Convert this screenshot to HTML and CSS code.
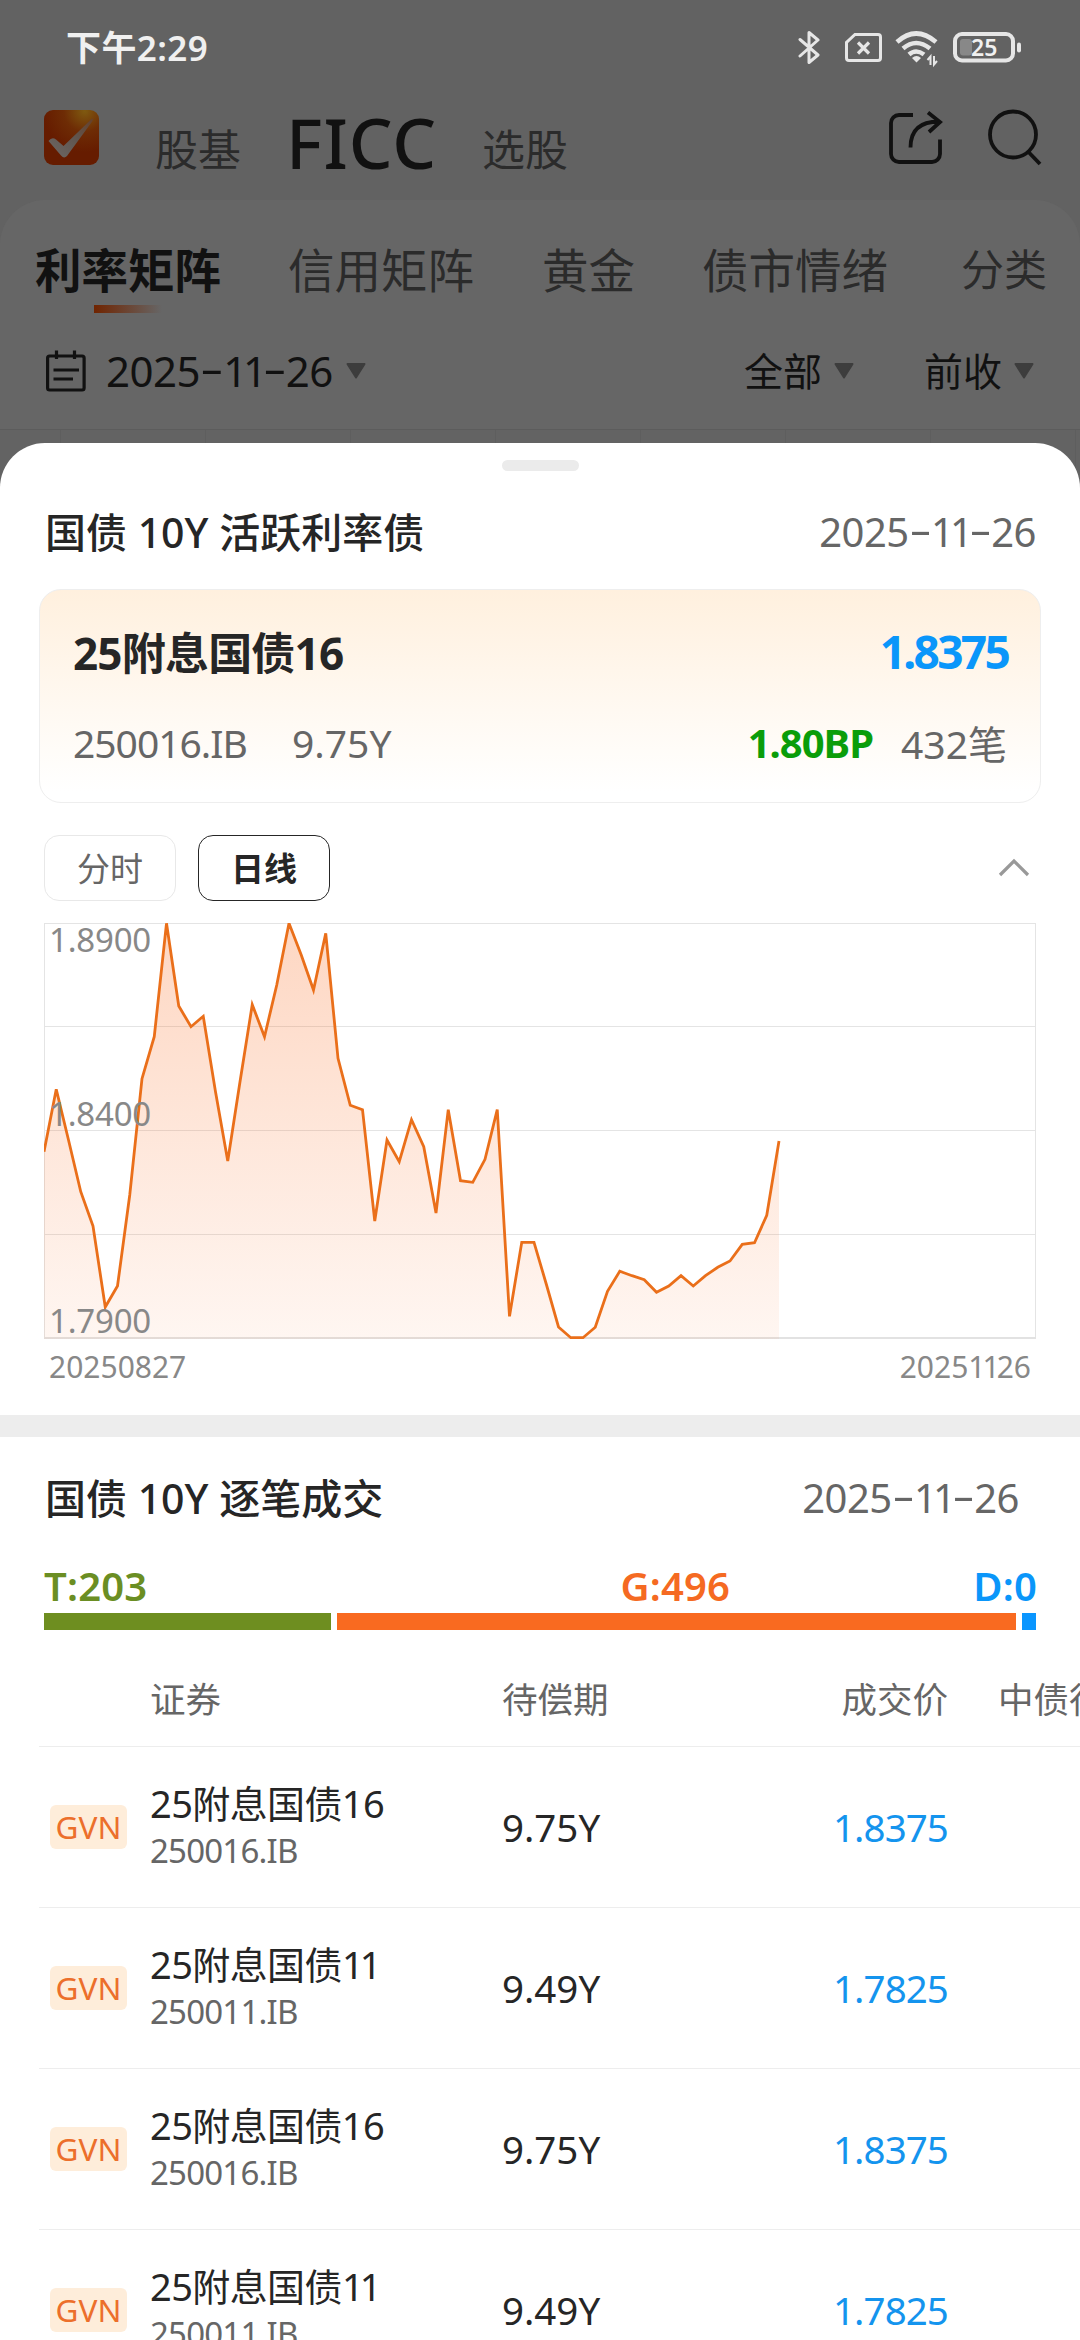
FILE: index.html
```html
<!DOCTYPE html>
<html lang="zh-CN">
<head>
<meta charset="utf-8">
<title>FICC 利率矩阵</title>
<link rel="stylesheet" href="styles.css">
</head>
<body>
<div class="screen">
  <div class="page">
    <div class="status">
      <span class="clock">下午2:29</span>
      <svg class="status-icons" width="230" height="40" viewBox="0 0 230 40" fill="none" stroke="#e6e6e6">
        <path d="M2 11.500L20 27L11 34.500V4.500L20 12L2 28" stroke-width="3" stroke-linejoin="round" stroke-linecap="round"/>
        <path d="M57 6.500H80a2.500 2.500 0 0 1 2.500 2.500V30a2.500 2.500 0 0 1-2.500 2.500H51a2.500 2.500 0 0 1-2.500-2.500V14.500Z" stroke-width="3"/>
        <path d="M60 14.500L71 25.500M71 14.500L60 25.500" stroke-width="3.200"/>
        <g stroke-width="4.600">
          <path d="M99 14Q118 -3 138 14"/>
          <path d="M105 20.500Q118 9.500 132 20.500"/>
          <path d="M111 26.500Q118 20.500 126 26.500"/>
        </g>
        <path d="M118.500 34.500L114 30q4.500-4 9 0Z" fill="#e6e6e6" stroke="none"/>
        <path d="M132.500 37V28.500L129.500 32M136 28V36.500L139 33" stroke-width="2"/>
        <rect x="157" y="6" width="58" height="26.500" rx="7" stroke-width="4"/>
        <rect x="162" y="11" width="12" height="16.500" rx="3" fill="#888" stroke="none"/>
        <rect x="219" y="14.500" width="4" height="10" rx="2" fill="#e6e6e6" stroke="none"/>
        <text class="battery-text" x="173" y="27.500">25</text>
      </svg>
    </div>
    <div class="header">
      <svg class="logo" width="55" height="55" viewBox="0 0 55 55">
        <defs>
          <radialGradient id="logoBg" cx="0.74" cy="0.02" r="0.75">
            <stop offset="0" stop-color="#7f5a10"/><stop offset="0.500" stop-color="#6e2c05"/><stop offset="1" stop-color="#661c00"/>
          </radialGradient>
          <linearGradient id="logoTick" x1="0" y1="1" x2="1" y2="0">
            <stop offset="0" stop-color="#6d6865"/><stop offset="0.550" stop-color="#605650"/><stop offset="1" stop-color="#66402a"/>
          </linearGradient>
        </defs>
        <rect width="55" height="55" rx="9" fill="url(#logoBg)"/>
        <path d="M4.500 31Q8 26.500 12 29.500L19.500 36L46 10.500Q50 6.500 48.500 11L23 46Q20 49 17 45.500Z" fill="url(#logoTick)"/>
      </svg>
      <span class="nav nav-fund">股基</span>
      <span class="nav nav-ficc">FICC</span>
      <span class="nav nav-pick">选股</span>
      <svg class="head-icons" width="160" height="64" viewBox="0 0 160 64" fill="none" stroke="#111" stroke-width="3.800">
        <path d="M29 11H15a8 8 0 0 0-8 8V50a8 8 0 0 0 8 8H48a8 8 0 0 0 8-8V35.500"/>
        <path d="M26.500 43.500C26.500 27 35 17.500 55 17.500M44 8.500L56 18L45 28"/>
        <circle cx="129" cy="30.500" r="23"/>
        <path d="M144 47.500L156 60"/>
      </svg>
    </div>
    <div class="panel">
      <div class="tabs">
        <span class="tab tab-on">利率矩阵</span>
        <span class="tab tab-credit">信用矩阵</span>
        <span class="tab tab-gold">黄金</span>
        <span class="tab tab-mood">债市情绪</span>
        <span class="tab tab-class">分类</span>
      </div>
      <div class="filters">
        <svg width="40" height="44" viewBox="0 0 40 44" fill="none" stroke="#111" stroke-width="3.200">
          <rect x="1.600" y="7" width="36.500" height="34" rx="2"/>
          <path d="M10.500 1.500V10M28.500 1.500V10M7.500 21H33M7.500 30H27"/>
        </svg>
        <span class="f-date">2025<i class="dash">-</i><i class="ones">11</i><i class="dash">-</i>26</span>
        <svg class="caret" width="22" height="16"><path d="M2.500 1H19.500L11 14.500Z"/></svg>
        <span class="f-all">全部</span>
        <svg class="caret" width="22" height="16"><path d="M2.500 1H19.500L11 14.500Z"/></svg>
        <span class="f-prev">前收</span>
        <svg class="caret" width="22" height="16"><path d="M2.500 1H19.500L11 14.500Z"/></svg>
      </div>
      <div class="matrix"><i></i><i></i><i></i><i></i><i></i><i></i><i></i><i></i></div>
    </div>
  </div>

  <div class="sheet">
    <div class="handle"></div>
    <div class="title-row">
      <h2>国债 10Y 活跃利率债</h2>
      <span class="date">2025<i class="dash">-</i><i class="ones">11</i><i class="dash">-</i>26</span>
    </div>
    <div class="card">
      <div class="card-top">
        <span class="bond">25附息国债16</span>
        <span class="yield">1.8375</span>
      </div>
      <div class="card-bottom">
        <span class="code">250016.IB</span>
        <span class="term">9.75Y</span>
        <span class="bp">1.80BP</span>
        <span class="deals">432笔</span>
      </div>
    </div>
    <div class="tools">
      <span class="chip">分时</span>
      <span class="chip chip-on">日线</span>
      <svg class="chevron" width="32" height="20" viewBox="0 0 32 20" fill="none" stroke="#999" stroke-width="3.200"><path d="M2 17L16 3L30 17"/></svg>
    </div>
    <div class="chart">
      <svg width="992" height="417" viewBox="44 923 992 417">
        <defs>
          <linearGradient id="area" x1="0" y1="0" x2="0" y2="1">
            <stop offset="0" stop-color="#fa6a1e" stop-opacity="0.270"/><stop offset="1" stop-color="#fa6a1e" stop-opacity="0.060"/>
          </linearGradient>
        </defs>
        <path d="M44 923.500H1036M44 1026.500H1036M44 1130.500H1036M44 1234.500H1036M44.500 923V1339M1035.500 923V1339" fill="none" stroke="#e4e4e4"/>
        <path d="M44 1338H1036" stroke="#e2e2e2" stroke-width="2"/>
        <path fill="url(#area)" d="M44 1151.700L56.250 1089.300L68.500 1140L80.750 1191.700L93 1226L105.250 1307L117.500 1286L129.750 1195L142 1078.700L154.250 1036.700L166.500 923.300L178.750 1006L191 1026.700L203.250 1016.300L215.500 1091.700L227.750 1161L240 1081.700L252.250 1004.700L264.500 1036.700L276.750 985L289 923.300L301.250 955L313.500 990L325.750 933.300L338 1058.300L350.250 1105.300L362.500 1109.700L374.750 1221L387 1140L399.250 1161.700L411.500 1119.700L423.750 1146.700L436 1213L448.250 1109.700L460.500 1180.700L472.750 1182.300L485 1159.300L497.250 1109.700L509.500 1316.300L521.750 1242.300L534 1242.300L546.250 1284L558.500 1327L570.750 1337.700L583 1337.700L595.250 1327.300L607.500 1291.300L619.750 1271.300L632 1275.700L644.250 1279.700L656.500 1292.300L668.750 1286L681 1275.700L693.250 1286L705.500 1275.700L717.750 1267.300L730 1261L742.250 1244.300L754.500 1242.700L766.750 1215.300L779 1141V1339H44Z"/>
        <path fill="none" stroke="#ea6f1a" stroke-width="2.800" d="M44 1151.700L56.250 1089.300L68.500 1140L80.750 1191.700L93 1226L105.250 1307L117.500 1286L129.750 1195L142 1078.700L154.250 1036.700L166.500 923.300L178.750 1006L191 1026.700L203.250 1016.300L215.500 1091.700L227.750 1161L240 1081.700L252.250 1004.700L264.500 1036.700L276.750 985L289 923.300L301.250 955L313.500 990L325.750 933.300L338 1058.300L350.250 1105.300L362.500 1109.700L374.750 1221L387 1140L399.250 1161.700L411.500 1119.700L423.750 1146.700L436 1213L448.250 1109.700L460.500 1180.700L472.750 1182.300L485 1159.300L497.250 1109.700L509.500 1316.300L521.750 1242.300L534 1242.300L546.250 1284L558.500 1327L570.750 1337.700L583 1337.700L595.250 1327.300L607.500 1291.300L619.750 1271.300L632 1275.700L644.250 1279.700L656.500 1292.300L668.750 1286L681 1275.700L693.250 1286L705.500 1275.700L717.750 1267.300L730 1261L742.250 1244.300L754.500 1242.700L766.750 1215.300L779 1141"/>
      </svg>
      <span class="y-label y-top">1.8900</span>
      <span class="y-label y-mid">1.8400</span>
      <span class="y-label y-low">1.7900</span>
    </div>
    <div class="x-labels"><span>20250827</span><span>2025<i class="ones">11</i>26</span></div>

    <div class="band"></div>

    <div class="title-row trades">
      <h2>国债 10Y 逐笔成交</h2>
      <span class="date">2025<i class="dash">-</i><i class="ones">11</i><i class="dash">-</i>26</span>
    </div>
    <div class="ratio-labels">
      <span class="t">T:203</span><span class="g">G:496</span><span class="d">D:0</span>
    </div>
    <div class="ratio"><i class="bar-t"></i><i class="bar-g"></i><i class="bar-d"></i></div>

    <div class="table">
      <div class="thead row">
        <span></span><span>证券</span><span>待偿期</span><span class="num">成交价</span><span class="last">中债行权</span>
      </div>
      <div class="row">
        <span class="tag">GVN</span>
        <div class="sec"><b>25附息国债16</b><small>250016.IB</small></div>
        <span class="years">9.75Y</span><span class="num price">1.8375</span><span></span>
      </div>
      <div class="row">
        <span class="tag">GVN</span>
        <div class="sec"><b>25附息国债<i class="ones">11</i></b><small>250011.IB</small></div>
        <span class="years">9.49Y</span><span class="num price">1.7825</span><span></span>
      </div>
      <div class="row">
        <span class="tag">GVN</span>
        <div class="sec"><b>25附息国债16</b><small>250016.IB</small></div>
        <span class="years">9.75Y</span><span class="num price">1.8375</span><span></span>
      </div>
      <div class="row">
        <span class="tag">GVN</span>
        <div class="sec"><b>25附息国债<i class="ones">11</i></b><small>250011.IB</small></div>
        <span class="years">9.49Y</span><span class="num price">1.7825</span><span></span>
      </div>
    </div>
  </div>
</div>
</body>
</html>
```
FILE: styles.css
```css
* { box-sizing: border-box; }
html, body { margin: 0; }
body {
  width: 1080px;
  font-family: "Noto Sans", "Noto Sans CJK SC", sans-serif;
  color: #262626;
  background: #fff;
}
svg { display: block; flex: none; }
span, h2, b, small { white-space: nowrap; }
i { font-style: normal; }
.screen { width: 1080px; height: 2340px; overflow: hidden; }

/* long, raised hyphen and tight "11" inside dates and codes */
.dash { display: inline-block; margin: 0 5px; line-height: 1; transform: translateY(-3px) scaleX(1.750); }
.ones { letter-spacing: -0.100em; }

/* dimmed page behind the sheet */
.page { height: 500px; background: #626262; color: #111; }
.status { display: flex; justify-content: space-between; height: 96px; padding: 0 52px 0 66px; align-items: center; }
.clock { color: #f0f0f0; font-size: 35px; font-weight: 600; line-height: 40px; letter-spacing: 0.400px; }
.status-icons { flex: none; }
.battery-text { font-size: 23px; font-weight: 600; fill: #f0f0f0; stroke: none; }

.header { display: flex; align-items: center; height: 104px; padding-left: 44px; }
.logo { margin-bottom: 21px; }
.nav { color: #2b2b2b; font-size: 43px; line-height: 60px; margin-top: 4px; }
.nav-fund { margin-left: 56px; width: 128px; }
.nav-ficc { width: 196px; margin-left: 3px; margin-top: -13px; font-size: 69px; font-weight: 500; letter-spacing: 1px; color: #111; }
.nav-pick { width: 302px; }
.head-icons { margin-left: 100px; margin-bottom: 25px; }

.panel { height: 300px; border-radius: 45px 45px 0 0; background: #666; overflow: hidden; }
.tabs { display: flex; align-items: center; height: 140px; padding-left: 35px; }
.tab { color: #2b2b2b; font-size: 46.500px; line-height: 60px; }
.tab-on { position: relative; width: 253px; color: #111; font-weight: 700; }
.tab-on::after { content: ""; position: absolute; left: 59px; top: 65px; width: 68px; height: 8px; background: linear-gradient(90deg, #702400, rgba(102, 102, 102, 0)); }
.tab-credit { width: 254px; }
.tab-gold { width: 160px; }
.tab-mood { width: 259px; }
.tab-class { font-size: 43px; }
.filters { display: flex; align-items: center; height: 62px; padding-left: 46px; }
.filters span { font-size: 39px; line-height: 50px; }
.filters .f-date { width: 239px; margin-left: 20px; font-size: 42px; letter-spacing: -0.500px; }
.f-all { width: 89px; margin-left: 377px; }
.f-prev { width: 89px; margin-left: 69px; }
.caret { fill: #3d3d3d; stroke: #3d3d3d; stroke-width: 2; stroke-linejoin: round; }
.matrix { display: grid; grid-template-columns: 61px repeat(7, 145px); margin-top: 27px; height: 71px; border-top: 1px solid #5c5c5c; background: #636363; }
.matrix i { border-right: 1px solid #5e5e5e; }

/* bottom sheet */
.sheet { position: relative; height: 1897px; margin-top: -57px; padding-top: 17px; border-radius: 45px 45px 0 0; background: #fff; }
.handle { width: 77px; height: 11px; margin: 0 auto; border-radius: 6px; background: #ebebeb; }
.title-row { display: flex; justify-content: space-between; align-items: center; height: 118px; padding: 4px 44px 0 45px; }
h2 { margin: 0; font-size: 41px; font-weight: 500; line-height: 60px; }
.date { color: #666; font-size: 40px; line-height: 60px; letter-spacing: -0.500px; }
.card { height: 214px; margin: 0 39px; padding: 0 33px; border: 1px solid #eee; border-radius: 22px; background: linear-gradient(#fff0de, #fff 95%); }
.card-top { display: flex; justify-content: space-between; align-items: center; height: 122px; font-size: 44px; font-weight: 700; }
.bond { letter-spacing: -0.800px; }
.yield { margin-right: -1px; color: #0a96fa; font-size: 46px; letter-spacing: -2.700px; }
.card-bottom { display: flex; align-items: center; height: 60px; color: #666; font-size: 39px; }
.code { width: 219px; letter-spacing: -1px; }
.term { flex: 1; }
.bp { margin-right: 28px; color: #0a9d0a; font-size: 40px; font-weight: 700; letter-spacing: -1px; }
.tools { display: flex; align-items: center; height: 66px; margin-top: 32px; padding: 0 50px 0 44px; }
.chip { width: 132px; height: 66px; margin-right: 22px; border: 1px solid #e8e8e8; border-radius: 15px; color: #666; font-size: 33px; line-height: 65px; text-align: center; }
.chip-on { border-color: #262626; color: #262626; font-weight: 700; }
.chevron { margin-left: auto; }

.chart { position: relative; margin: 22px 44px 0; }
.y-label { position: absolute; left: 5px; color: #888; font-size: 33px; line-height: 40px; letter-spacing: -0.200px; }
.y-top { top: -3px; }
.y-mid { top: 171px; }
.y-low { top: 378px; }
.x-labels { display: flex; justify-content: space-between; align-items: center; height: 52px; margin-bottom: 23px; padding: 0 49px; color: #888; font-size: 30px; }
.band { height: 22px; background: #ededed; }

.trades { height: 124px; padding: 0 61px 2px 45px; }
.ratio-labels { display: flex; justify-content: space-between; align-items: center; height: 52px; padding: 0 43px 4px 44px; font-size: 40px; font-weight: 600; letter-spacing: 0.200px; }
.ratio-labels .t { color: #6b8e23; }
.ratio-labels .g { margin-left: 473px; margin-right: auto; color: #f56a22; }
.ratio-labels .d { color: #0a96fa; }
.ratio { display: grid; grid-template-columns: 286.500px 1fr 14px; gap: 6px; height: 17px; margin: 0 44px; }
.bar-t { background: #6e8e20; }
.bar-g { background: #f96a20; }
.bar-d { background: #0a96ff; }

.row { display: grid; grid-template-columns: 111px 352px 300px 146px 1fr; align-items: center; height: 161px; margin-left: 39px; border-bottom: 1px solid #ededed; }
.thead { height: 117px; padding-top: 18px; color: #666; font-size: 35.500px; overflow: hidden; }
.num { text-align: right; }
.last { padding-left: 50px; }
.tag { width: 77px; height: 44px; margin-left: 11px; border-radius: 6px; background: #feedda; color: #ec6f2b; font-size: 31.500px; line-height: 43px; text-align: center; }
.sec { display: flex; flex-direction: column; }
.sec b { font-size: 38px; font-weight: 400; line-height: 48px; letter-spacing: -0.600px; }
.sec small { color: #666; font-size: 33px; line-height: 48px; letter-spacing: -0.800px; }
.years { font-size: 38.500px; }
.price { font-size: 38.500px; letter-spacing: -0.900px; color: #1494ee; }
```
